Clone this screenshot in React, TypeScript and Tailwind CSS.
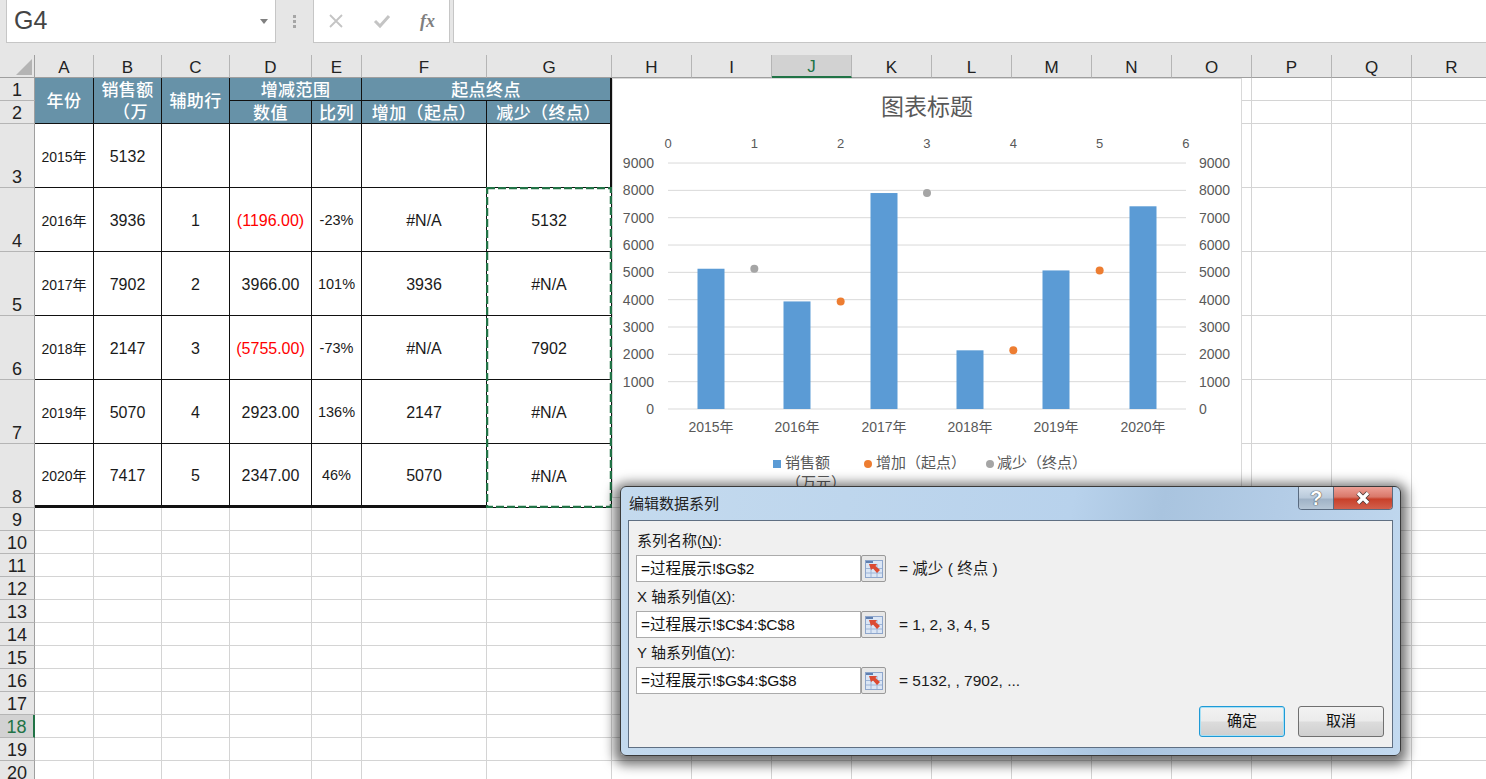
const columns = ["A", "B", "C", "D", "E", "F", "G", "H", "I", "J", "K", "L", "M", "N", "O", "P", "Q", "R"];
const tailColumns = columns.slice(7);
const lowerRows = [9, 10, 11, 12, 13, 14, 15, 16, 17, 18, 19, 20];

const dataRows = [
  { n: 3, year: "2015年", sales: "5132", helper: "", delta: "", pct: "", start: "", end: "" },
  { n: 4, year: "2016年", sales: "3936", helper: "1", delta: "(1196.00)", pct: "-23%", start: "#N/A", end: "5132", loss: true },
  { n: 5, year: "2017年", sales: "7902", helper: "2", delta: "3966.00", pct: "101%", start: "3936", end: "#N/A" },
  { n: 6, year: "2018年", sales: "2147", helper: "3", delta: "(5755.00)", pct: "-73%", start: "#N/A", end: "7902", loss: true },
  { n: 7, year: "2019年", sales: "5070", helper: "4", delta: "2923.00", pct: "136%", start: "2147", end: "#N/A" },
  { n: 8, year: "2020年", sales: "7417", helper: "5", delta: "2347.00", pct: "46%", start: "5070", end: "#N/A" },
];

const RowHeader = ({ n }: { n: number }) => (
  <div
    className={
      n === 18
        ? "flex items-end justify-center border-r-2 border-b border-r-[#217346] border-b-[#b5b5b5] bg-[#d2d2d2] text-[18px] leading-[19px] text-[#217346]"
        : "flex items-end justify-center border-r border-b border-r-[#9f9f9f] border-b-[#b5b5b5] bg-[#e6e6e6] text-[18px] leading-[19px] text-[#222222]"
    }
  >
    {n}
  </div>
);

const Blank = () => <div className="border-r border-b border-[#d4d4d4] bg-white" />;

const HeaderCell = ({ children, className = "" }: { children?: React.ReactNode; className?: string }) => (
  <div
    className={`flex items-center justify-center border-r border-b border-[#111111] bg-[#6792a8] pt-[3px] text-[17px] leading-[22px] font-medium tracking-[0.4px] text-white ${className}`}
  >
    {children}
  </div>
);

const Cell = ({
  children,
  last = false,
  size = "text-[16px]",
  tone = "text-[#1a1a1a]",
  className = "",
}: {
  children?: React.ReactNode;
  last?: boolean;
  size?: string;
  tone?: string;
  className?: string;
}) => (
  <div
    className={`flex items-center justify-center border-r border-[#111111] bg-white pt-[3px] ${last ? "border-b-[3px]" : "border-b"} ${size} ${tone} ${className}`}
  >
    {children}
  </div>
);

const Sheet = () => (
  <div className="grid grid-cols-[35px_59px_68px_68px_82px_50px_125px_125px_repeat(11,80px)] grid-rows-[23px_23px_23px_repeat(6,64px)_repeat(12,23px)]">
    {/* column letters */}
    <div className="flex items-end justify-end border-r border-b border-[#9f9f9f] bg-[#e6e6e6] pr-[2px] pb-[2px]">
      <svg width="16" height="16" viewBox="0 0 16 16">
        <polygon points="16,0 16,16 0,16" fill="#b4b4b4" />
      </svg>
    </div>
    {columns.map((c) => (
      <div
        key={c}
        className={
          c === "J"
            ? "flex items-center justify-center border-r border-b-2 border-r-[#b5b5b5] border-b-[#217346] bg-[#d2d2d2] pt-[3px] text-[17px] text-[#217346]"
            : "flex items-center justify-center border-r border-b border-r-[#b5b5b5] border-b-[#9f9f9f] bg-[#e6e6e6] pt-[3px] text-[17px] text-[#222222]"
        }
      >
        {c}
      </div>
    ))}

    {/* rows 1 and 2 */}
    <RowHeader n={1} />
    <HeaderCell className="row-span-2">年份</HeaderCell>
    <HeaderCell className="row-span-2 flex-col">
      <span>销售额</span>
      <span className="pl-[6px]">（万</span>
    </HeaderCell>
    <HeaderCell className="row-span-2">辅助行</HeaderCell>
    <HeaderCell className="col-span-2">增减范围</HeaderCell>
    <HeaderCell className="col-span-2 border-r-2">起点终点</HeaderCell>
    {tailColumns.map((c) => (
      <Blank key={c} />
    ))}
    <RowHeader n={2} />
    <HeaderCell>数值</HeaderCell>
    <HeaderCell>比列</HeaderCell>
    <HeaderCell>增加（起点）</HeaderCell>
    <HeaderCell className="border-r-2">减少（终点）</HeaderCell>
    {tailColumns.map((c) => (
      <Blank key={c} />
    ))}

    {/* data */}
    {dataRows.map((r) => {
      const last = r.n === 8;
      return (
        <div key={r.n} className="contents">
          <RowHeader n={r.n} />
          <Cell last={last} size="text-[14px]">
            {r.year}
          </Cell>
          <Cell last={last}>{r.sales}</Cell>
          <Cell last={last}>{r.helper}</Cell>
          <Cell last={last} tone={r.loss ? "text-[#ff0000]" : "text-[#1a1a1a]"}>
            {r.delta}
          </Cell>
          <Cell last={last} size="text-[14.5px]">
            {r.pct}
          </Cell>
          <Cell last={last}>{r.start}</Cell>
          <Cell className={r.n === 3 ? "border-r-2" : ""}>{r.end}</Cell>
          {tailColumns.map((c) => (
            <Blank key={c} />
          ))}
        </div>
      );
    })}

    {/* empty rows */}
    {lowerRows.map((n) => (
      <div key={n} className="contents">
        <RowHeader n={n} />
        {columns.map((c) => (
          <Blank key={c} />
        ))}
      </div>
    ))}
  </div>
);

const bars = [
  { x: 711, v: 5132, label: "2015年" },
  { x: 797, v: 3936, label: "2016年" },
  { x: 884, v: 7902, label: "2017年" },
  { x: 970, v: 2147, label: "2018年" },
  { x: 1056, v: 5070, label: "2019年" },
  { x: 1143, v: 7417, label: "2020年" },
];
const ticks = [0, 1000, 2000, 3000, 4000, 5000, 6000, 7000, 8000, 9000];
const yOf = (v: number) => 409 - (v / 1000) * 27.33;
const xOf = (n: number) => 668 + n * 86.33;
const orangeDots = [
  { n: 2, v: 3936 },
  { n: 4, v: 2147 },
  { n: 5, v: 5070 },
];
const grayDots = [
  { n: 1, v: 5132 },
  { n: 3, v: 7902 },
];

const Chart = () => (
  <div className="absolute top-[23px] left-[612px] h-[420px] w-[630px] border border-[#d9d9d9] bg-white">
    <svg viewBox="613 79 628 418" className="block h-full w-full" fontFamily="'Liberation Sans','Noto Sans CJK SC',sans-serif">
      <text x="927" y="115" textAnchor="middle" fontSize="23" fill="#595959">
        图表标题
      </text>
      {[0, 1, 2, 3, 4, 5, 6].map((n) => (
        <text key={n} x={xOf(n)} y="148" textAnchor="middle" fontSize="13" fill="#595959">
          {n}
        </text>
      ))}
      {ticks.map((t) => (
        <g key={t}>
          <line x1="668" x2="1186" y1={yOf(t)} y2={yOf(t)} stroke="#d9d9d9" />
          <text x="654" y={yOf(t) + 5} textAnchor="end" fontSize="14" fill="#595959">
            {t}
          </text>
          <text x="1199" y={yOf(t) + 5} fontSize="14" fill="#595959">
            {t}
          </text>
        </g>
      ))}
      {bars.map((b) => (
        <g key={b.label}>
          <rect x={b.x - 13.5} y={yOf(b.v)} width="27" height={409 - yOf(b.v)} fill="#5b9bd5" />
          <text x={b.x} y="432" textAnchor="middle" fontSize="14" fill="#595959">
            {b.label}
          </text>
        </g>
      ))}
      {orangeDots.map((d) => (
        <circle key={d.n} cx={xOf(d.n)} cy={yOf(d.v)} r="4" fill="#ed7d31" />
      ))}
      {grayDots.map((d) => (
        <circle key={d.n} cx={xOf(d.n)} cy={yOf(d.v)} r="4" fill="#a5a5a5" />
      ))}
      <rect x="773" y="460" width="8" height="8" fill="#5b9bd5" />
      <text x="785" y="468" fontSize="15" fill="#595959">
        销售额
      </text>
      <text x="786" y="488" fontSize="15" fill="#595959">
        （万元）
      </text>
      <circle cx="868" cy="464" r="4" fill="#ed7d31" />
      <text x="876" y="468" fontSize="15" fill="#595959">
        增加（起点）
      </text>
      <circle cx="990" cy="464" r="4" fill="#a5a5a5" />
      <text x="997" y="468" fontSize="15" fill="#595959">
        减少（终点）
      </text>
    </svg>
  </div>
);

const RefIcon = () => (
  <svg width="18" height="18" viewBox="0 0 18 18">
    <rect x="0.5" y="0.5" width="17" height="17" fill="#dbe6f5" stroke="#8ea6cc" />
    <rect x="1" y="1" width="7" height="2" fill="#5f7fb0" />
    <path d="M6 4V17M12 4V17M1 8.5H17M1 13H17" stroke="#9db4d6" />
    <path d="M4 4h8l-1.5 2 4.5 4-3 3-4-4.5L6 10z" fill="#dc4a32" />
  </svg>
);

const SeriesField = ({ label, formula, value }: { label: React.ReactNode; formula: string; value: string }) => (
  <div className="flex flex-col">
    <div className="h-[24px] text-[15px] leading-[20px] text-[#1a1a1a]">{label}</div>
    <div className="flex items-center">
      <div className="-ml-[1px] flex h-[27px] w-[225px] items-center border border-[#ababab] bg-white pl-[4px] text-[15.5px] text-[#111111]">
        {formula}
      </div>
      <button className="flex h-[27px] w-[25px] items-center justify-center rounded-[2px] border border-[#9a9a9a] bg-[#e8e8e8]">
        <RefIcon />
      </button>
      <span className="ml-[13px] text-[15.5px] text-[#1a1a1a]">{value}</span>
    </div>
  </div>
);

const SeriesDialog = () => (
  <div className="absolute top-[431px] left-[620px] flex h-[270px] w-[781px] flex-col rounded-[6px] border border-[#3a3a3a] bg-[linear-gradient(100deg,#c4daee_0%,#b8d2ec_55%,#a9c4df_66%,#b3cce6_80%,#c3daf0_100%)] px-[7px] pb-[7px] shadow-[0_3px_12px_6px_rgba(0,0,0,0.55)]">
    <div className="flex h-[33px] shrink-0 items-start justify-between">
      <span className="mt-[7px] ml-[1px] text-[15px] leading-[20px] text-[#222222]">编辑数据系列</span>
      <div className="flex h-[23px] overflow-hidden rounded-b-[4px] border border-t-0 border-[#5a6b80]">
        <div className="flex w-[35px] items-center justify-center border-r border-[#5a6b80] bg-[linear-gradient(180deg,#d4e0ec_0%,#b9c9da_50%,#9fb2c6_55%,#b6c6d6_100%)] text-[20px] leading-none font-bold text-white [text-shadow:0_0_1px_#333,0_0_1px_#333]">
          ?
        </div>
        <div className="flex w-[58px] items-center justify-center bg-[linear-gradient(180deg,#eda096_0%,#d9786a_45%,#c8402a_55%,#d2604c_100%)]">
          <svg width="16" height="14" viewBox="0 0 16 14">
            <path d="M3 2l10 10M13 2L3 12" stroke="#4a3a38" strokeWidth="5" />
            <path d="M3 2l10 10M13 2L3 12" stroke="#ffffff" strokeWidth="3.4" />
          </svg>
        </div>
      </div>
    </div>
    <div className="flex flex-1 flex-col border border-[#5f6f82] bg-[#f0f0f0] pt-[10px] pr-[8px] pb-[10px] pl-[8px]">
      <div className="flex flex-col gap-[5px]">
        <SeriesField
          label={
            <>
              系列名称(<span className="underline">N</span>):
            </>
          }
          formula="=过程展示!$G$2"
          value="= 减少 ( 终点 )"
        />
        <SeriesField
          label={
            <>
              X 轴系列值(<span className="underline">X</span>):
            </>
          }
          formula="=过程展示!$C$4:$C$8"
          value="= 1, 2, 3, 4, 5"
        />
        <SeriesField
          label={
            <>
              Y 轴系列值(<span className="underline">Y</span>):
            </>
          }
          formula="=过程展示!$G$4:$G$8"
          value="= 5132, , 7902, ..."
        />
      </div>
      <div className="mt-auto flex justify-end gap-[13px]">
        <button className="h-[31px] w-[86px] rounded-[3px] border border-[#1e9ad6] bg-[linear-gradient(180deg,#f2f2f2_0%,#ebebeb_48%,#dcdcdc_52%,#cfcfcf_100%)] text-[15px] text-[#111111] shadow-[inset_0_0_0_1px_#a8e0f5]">
          确定
        </button>
        <button className="h-[31px] w-[86px] rounded-[3px] border border-[#707070] bg-[linear-gradient(180deg,#f2f2f2_0%,#ebebeb_48%,#dcdcdc_52%,#cfcfcf_100%)] text-[15px] text-[#111111]">
          取消
        </button>
      </div>
    </div>
  </div>
);

export default function App() {
  return (
    <div className="h-[779px] w-[1486px] overflow-hidden bg-white font-['Liberation_Sans','Noto_Sans_CJK_SC',sans-serif]">
      {/* formula bar */}
      <div className="flex h-[55px] items-start bg-[#e6e6e6] pl-[6px]">
        <div className="flex h-[43px] w-[270px] items-center justify-between border border-t-0 border-[#c6c6c6] bg-white pr-[7px] pl-[7px] text-[25px] text-[#444444]">
          <span>G4</span>
          <svg width="8" height="5" viewBox="0 0 8 5">
            <polygon points="0,0 8,0 4,5" fill="#808080" />
          </svg>
        </div>
        <div className="flex h-[43px] w-[37px] flex-col items-center justify-center gap-[2px]">
          <span className="h-[3px] w-[3px] bg-[#a6a6a6]" />
          <span className="h-[3px] w-[3px] bg-[#a6a6a6]" />
          <span className="h-[3px] w-[3px] bg-[#a6a6a6]" />
        </div>
        <div className="flex h-[43px] w-[137px] items-center justify-between border border-t-0 border-[#c6c6c6] bg-white pr-[14px] pl-[14px]">
          <svg width="16" height="16" viewBox="0 0 16 16">
            <path d="M2 2l12 12M14 2L2 14" stroke="#c4c4c4" strokeWidth="1.8" />
          </svg>
          <svg width="18" height="16" viewBox="0 0 18 16">
            <path d="M2 8l5 5L16 3" fill="none" stroke="#c4c4c4" strokeWidth="3" />
          </svg>
          <span className="font-['Liberation_Serif',serif] text-[18px] font-bold text-[#7f7f7f] italic">fx</span>
        </div>
        <div className="ml-[3px] h-[43px] flex-1 border border-t-0 border-r-0 border-[#c6c6c6] bg-white" />
      </div>

      {/* sheet */}
      <div className="relative">
        <Sheet />
        {/* marching ants around G4:G8 */}
        <svg className="absolute top-[132px] left-[486px]" width="126" height="321">
          <rect x="1" y="1" width="124" height="319" fill="none" stroke="#217346" strokeWidth="2.5" strokeDasharray="8 3" />
        </svg>
        <Chart />
        <SeriesDialog />
      </div>
    </div>
  );
}
